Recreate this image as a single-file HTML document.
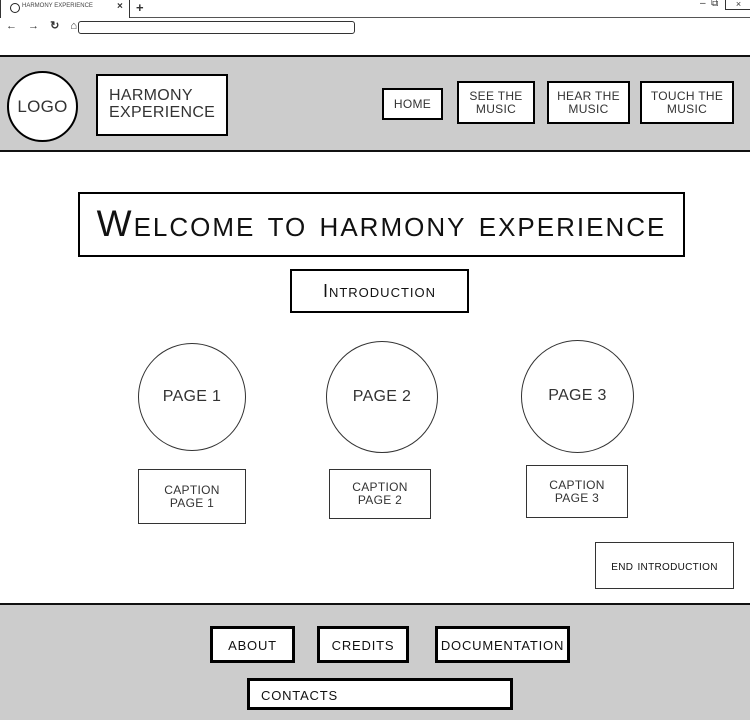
<!DOCTYPE html>
<html><head><style>
body{margin:0;width:750px;height:720px;position:relative;background:#fff;font-family:"Liberation Sans",sans-serif;color:#333;overflow:hidden}
.a{position:absolute;box-sizing:border-box;display:flex;align-items:center;justify-content:center;text-align:center;font-variant:small-caps;letter-spacing:0.3px;line-height:1.05;white-space:nowrap}
.b{border:2px solid #000;background:#fff}
.c{border:1.5px solid #333;background:#fff}
.r{border-radius:50%}
</style></head><body>
<div style="position:absolute;left:0;top:17px;width:750px;height:1px;background:#555"></div>
<div style="position:absolute;left:0;top:0;width:128px;height:18px;background:#fff;border-left:1px solid #333;border-right:1px solid #333"></div>
<div style="position:absolute;left:10px;top:3px;width:8px;height:8px;border:1.5px solid #222;border-radius:50%"></div>
<div style="position:absolute;left:22px;top:3px;font-size:6px;color:#444">HARMONY EXPERIENCE</div>
<div style="position:absolute;left:117px;top:1px;font-size:10px;font-weight:bold">×</div>
<div style="position:absolute;left:136px;top:0px;font-size:13px;font-weight:bold">+</div>
<div style="position:absolute;left:700px;top:-2px;font-size:10px">–&nbsp; ⧉</div>
<div style="position:absolute;left:725px;top:0;width:25px;height:9px;border-left:1px solid #333;border-bottom:1px solid #333;font-size:9px;text-align:center;line-height:8px">×</div>
<div style="position:absolute;left:6px;top:19px;font-size:11px;font-weight:bold;letter-spacing:4px">← → ↻ ⌂</div>
<div style="position:absolute;left:78px;top:21px;width:277px;height:13px;box-sizing:border-box;border:1.5px solid #333;border-radius:3px"></div>

<div style="position:absolute;left:0;top:55px;width:750px;height:97px;box-sizing:border-box;background:#ccc;border-top:2px solid #111;border-bottom:2px solid #111"></div>
<div class="a b r" style="left:7px;top:71px;width:71px;height:71px;font-size:17px">LOGO</div>
<div class="a b" style="left:96px;top:74px;width:132px;height:62px;font-size:16px;justify-content:flex-start;padding-left:11px;text-align:left">HARMONY<br>EXPERIENCE</div>
<div class="a b" style="left:382px;top:88px;width:61px;height:32px;font-size:12px">HOME</div>
<div class="a b" style="left:457px;top:81px;width:78px;height:43px;font-size:12px">SEE THE<br>MUSIC</div>
<div class="a b" style="left:547px;top:81px;width:83px;height:43px;font-size:12px">HEAR THE<br>MUSIC</div>
<div class="a b" style="left:640px;top:81px;width:94px;height:43px;font-size:12px">TOUCH THE<br>MUSIC</div>

<div class="a b" style="left:78px;top:192px;width:607px;height:65px;font-size:37px;color:#111;letter-spacing:2px">Welcome to harmony experience</div>
<div class="a b" style="left:290px;top:269px;width:179px;height:44px;font-size:18px;color:#111;letter-spacing:1px">Introduction</div>

<div class="a c r" style="left:138px;top:343px;width:108px;height:108px;font-size:16px">PAGE 1</div>
<div class="a c r" style="left:326px;top:341px;width:112px;height:112px;font-size:16px">PAGE 2</div>
<div class="a c r" style="left:521px;top:340px;width:113px;height:113px;font-size:16px">PAGE 3</div>
<div class="a c" style="left:138px;top:469px;width:108px;height:55px;font-size:12px">CAPTION<br>PAGE 1</div>
<div class="a c" style="left:329px;top:469px;width:102px;height:50px;font-size:12px">CAPTION<br>PAGE 2</div>
<div class="a c" style="left:526px;top:465px;width:102px;height:53px;font-size:12px">CAPTION<br>PAGE 3</div>
<div class="a c" style="left:595px;top:542px;width:139px;height:47px;font-size:14px;color:#111">end introduction</div>

<div style="position:absolute;left:0;top:603px;width:750px;height:117px;box-sizing:border-box;background:#ccc;border-top:2px solid #111"></div>
<div class="a b" style="left:210px;top:626px;width:85px;height:37px;font-size:18px;letter-spacing:0.8px;border-width:3px;color:#111">about</div>
<div class="a b" style="left:317px;top:626px;width:92px;height:37px;font-size:18px;letter-spacing:0.8px;border-width:3px;color:#111">credits</div>
<div class="a b" style="left:435px;top:626px;width:135px;height:37px;font-size:18px;letter-spacing:0.8px;border-width:3px;color:#111">documentation</div>
<div class="a b" style="left:247px;top:678px;width:266px;height:32px;font-size:18px;letter-spacing:0.8px;border-width:3px;justify-content:flex-start;padding-left:11px;color:#111">contacts</div>
</body></html>
